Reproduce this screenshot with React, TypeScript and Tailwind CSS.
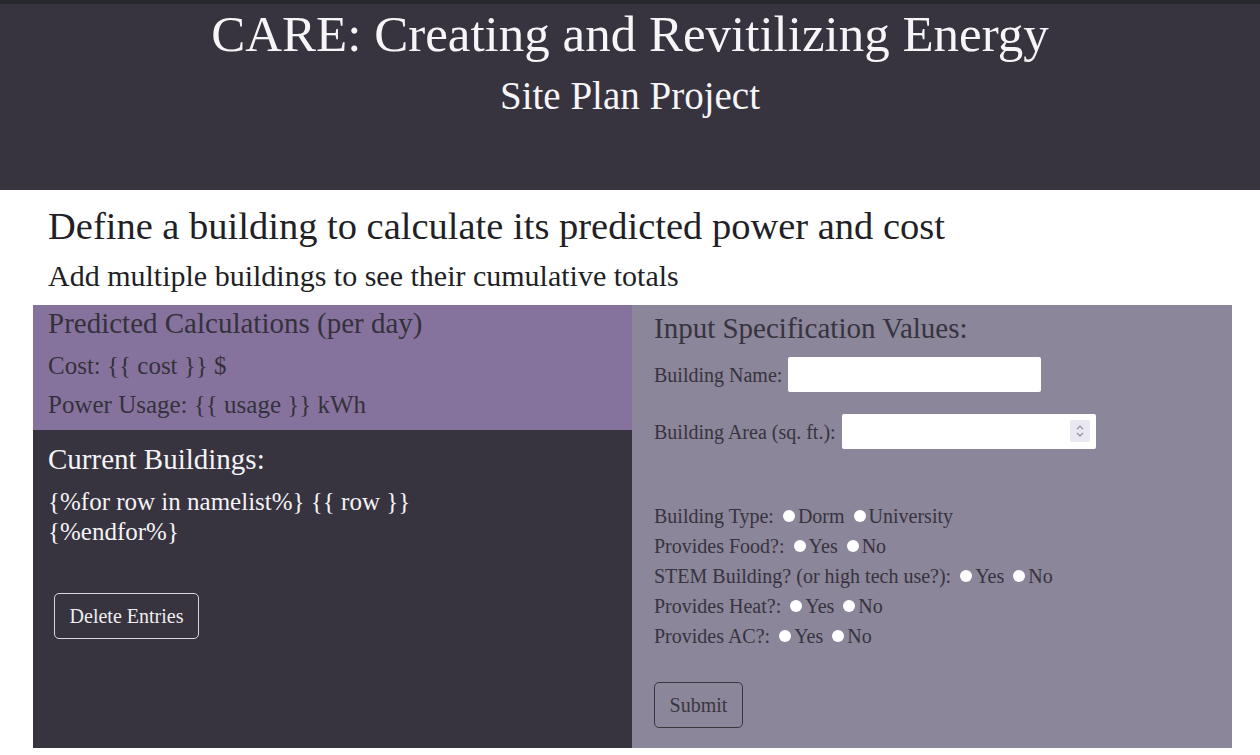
import React from 'react';

const Radio = () => (
  <span className="mr-[3px] ml-[4px] inline-block h-[12px] w-[12px] rounded-full bg-white align-[1px]" />
);

function RadioRow({ label, options }: { label: string; options: string[] }) {
  return (
    <div className="leading-[30px]">
      {label}
      {options.map((o) => (
        <span key={o}>
          {' '}
          <Radio />
          {o}
        </span>
      ))}
    </div>
  );
}

function Spinner() {
  return (
    <span className="pointer-events-none absolute top-[6px] right-[6px] flex h-[22px] w-[20px] flex-col items-center justify-center gap-[2px] rounded-[2px] bg-[#e9e7ef]">
      <svg width="8" height="5" viewBox="0 0 8 5" fill="none">
        <path d="M1 4.2 4 1.2 7 4.2" stroke="#8a8794" strokeWidth="1.2" />
      </svg>
      <svg width="8" height="5" viewBox="0 0 8 5" fill="none">
        <path d="M1 0.8 4 3.8 7 0.8" stroke="#8a8794" strokeWidth="1.2" />
      </svg>
    </span>
  );
}

export default function App() {
  return (
    <div className="min-h-screen bg-white font-['Liberation_Serif',serif]">
      <div className="h-[4px] bg-[#262a2c]" />

      <header className="h-[186px] bg-[#37333f] pt-[5px] text-center text-[#f6f5f7]">
        <h1 className="text-[51px] leading-[51px]">CARE: Creating and Revitilizing Energy</h1>
        <h2 className="mt-[16px] text-[39px] leading-none">Site Plan Project</h2>
      </header>

      <section className="pt-[17px] pl-[48px] text-[#221f26]">
        <h2 className="text-[38.5px] leading-[38px]">Define a building to calculate its predicted power and cost</h2>
        <h3 className="mt-[16px] text-[30px] leading-none">Add multiple buildings to see their cumulative totals</h3>
      </section>

      <main className="mt-[14px] ml-[33px] flex h-[443px] w-[1199px]">
        <div className="flex w-[599px] flex-col">
          <div className="h-[125px] bg-[#85739d] pt-[4px] pl-[15px] text-[#35313c]">
            <h3 className="text-[29px] leading-none">Predicted Calculations (per day)</h3>
            <p className="mt-[15px] text-[25px] leading-none">Cost: {'{{ cost }}'} $</p>
            <p className="mt-[14px] text-[25px] leading-none">Power Usage: {'{{ usage }}'} kWh</p>
          </div>
          <div className="flex-1 bg-[#37333f] pt-[15px] pl-[15px] text-[#f4f3f6]">
            <h3 className="text-[29px] leading-none">Current Buildings:</h3>
            <p className="mt-[13px] w-[400px] text-[25px] leading-[30px]">
              {'{%for row in namelist%} {{ row }}'}
              <br />
              {'{%endfor%}'}
            </p>
            <button className="mt-[46px] ml-[6px] h-[46px] w-[145px] rounded-[5px] border border-[#d8d8dc] text-[20px] text-[#eeeef0]">
              Delete Entries
            </button>
          </div>
        </div>

        <form className="flex-1 bg-[#8b8699] pt-[9px] pl-[22px] text-[20px] text-[#37333f]">
          <h3 className="text-[29px] leading-none">Input Specification Values:</h3>
          <div className="mt-[14px] flex h-[35px] items-center">
            <span className="leading-none">Building Name:</span>
            <input type="text" className="ml-[6px] h-[35px] w-[253px] rounded-[2px] bg-white px-2 outline-none" />
          </div>
          <div className="mt-[22px] flex h-[35px] items-center">
            <span className="leading-none">Building Area (sq. ft.):</span>
            <span className="relative ml-[6px] h-[35px] w-[254px]">
              <input type="text" className="h-[35px] w-full rounded-[2px] bg-white px-2 outline-none" />
              <Spinner />
            </span>
          </div>
          <div className="mt-[52px]">
            <RadioRow label="Building Type:" options={['Dorm', 'University']} />
            <RadioRow label="Provides Food?:" options={['Yes', 'No']} />
            <RadioRow label="STEM Building? (or high tech use?):" options={['Yes', 'No']} />
            <RadioRow label="Provides Heat?:" options={['Yes', 'No']} />
            <RadioRow label="Provides AC?:" options={['Yes', 'No']} />
          </div>
          <button type="button" className="mt-[31px] h-[46px] w-[89px] rounded-[5px] border border-[#3a3640] text-[20px] text-[#3a3640]">
            Submit
          </button>
        </form>
      </main>
    </div>
  );
}
